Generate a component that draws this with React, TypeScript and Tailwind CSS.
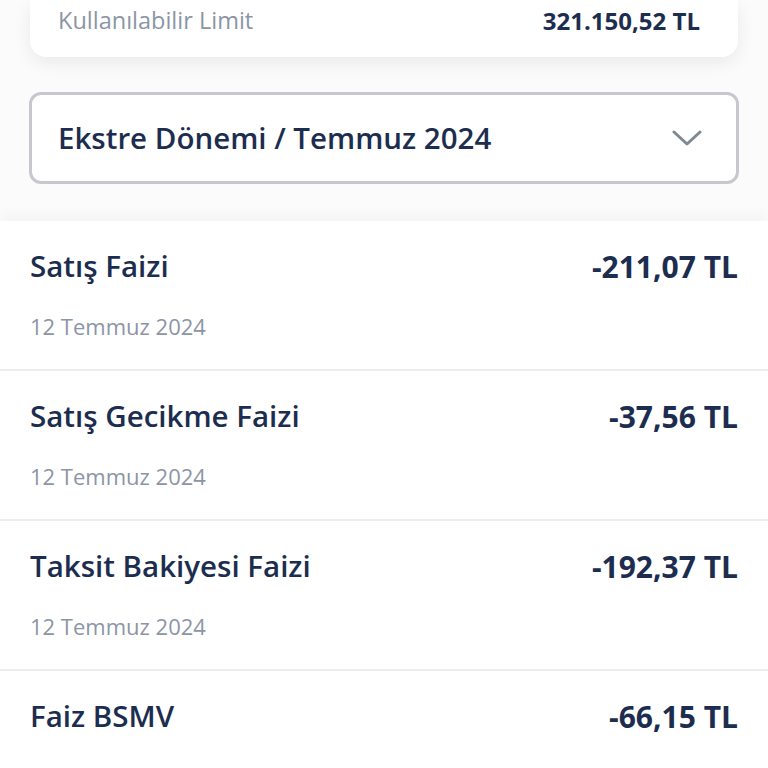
const rows = [
  { title: 'Satış Faizi', amount: '-211,07 TL', date: '12 Temmuz 2024' },
  { title: 'Satış Gecikme Faizi', amount: '-37,56 TL', date: '12 Temmuz 2024' },
  { title: 'Taksit Bakiyesi Faizi', amount: '-192,37 TL', date: '12 Temmuz 2024' },
  { title: 'Faiz BSMV', amount: '-66,15 TL', date: '12 Temmuz 2024' },
];

export default function App() {
  return (
    <main className="w-[768px] h-[768px] overflow-hidden bg-[#fbfbfc] font-['Open_Sans',sans-serif] text-[#1c2d4f]">
      {/* limit card */}
      <div className="px-[30px]">
        <div className="h-[57px] bg-white rounded-b-2xl shadow-[0_6px_18px_rgba(0,0,0,0.07)] flex items-center justify-between pl-[28px] pr-[38px] pb-[16px]">
          <span className="text-[23.5px] font-medium text-[#8b95a5]">Kullanılabilir Limit</span>
          <span className="text-[24px] font-bold">321.150,52 TL</span>
        </div>
      </div>

      {/* statement period */}
      <div className="px-[29px] pt-[35px]">
        <button className="w-full h-[92px] bg-white border-[3px] border-[#c6c8cd] rounded-xl flex items-center justify-between pl-[26px] pr-[34px]">
          <span className="text-[29.5px] font-semibold">Ekstre Dönemi / Temmuz 2024</span>
          <svg width="30" height="18" viewBox="0 0 30 18" fill="none">
            <path d="M2 3l13 12L28 3" stroke="#7c8a95" strokeWidth="3" strokeLinecap="round" strokeLinejoin="round" />
          </svg>
        </button>
      </div>

      {/* transactions */}
      <div className="mt-[37px] bg-white shadow-[0_-6px_12px_rgba(0,0,0,0.03)]">
        {rows.map((r) => (
          <div key={r.title} className="h-[150px] border-b-2 border-[#ececee] px-[30px] pt-[25px]">
            <div className="flex items-center justify-between h-[40px]">
              <span className="text-[29.5px] font-semibold">{r.title}</span>
              <span className="text-[30px] font-bold">{r.amount}</span>
            </div>
            <div className="mt-[24px] text-[22px] font-medium text-[#8c95a5]">{r.date}</div>
          </div>
        ))}
      </div>
    </main>
  );
}
